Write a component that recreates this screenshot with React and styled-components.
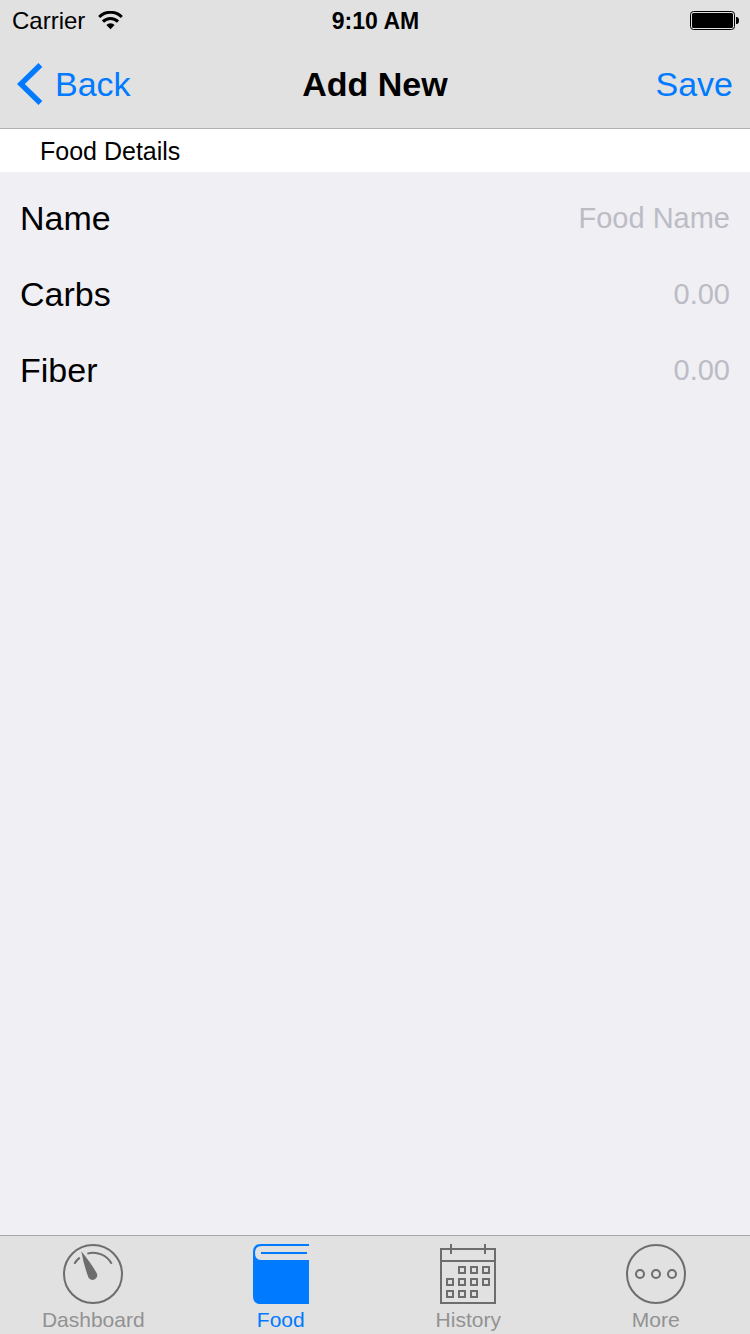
import React, { useState } from 'react';
import styled, { createGlobalStyle } from 'styled-components';

const GlobalStyle = createGlobalStyle`
  * {
    box-sizing: border-box;
  }
  body {
    margin: 0;
    background: #efeff4;
    color: #000;
    font-family: 'Liberation Sans', Arial, sans-serif;
  }
`;

const Screen = styled.div`
  display: flex;
  flex-direction: column;
  min-height: 100vh;
`;

const Header = styled.header`
  background: #e1e1e1;
  border-bottom: 1px solid #b2b2b2;
`;

const StatusBar = styled.div`
  display: grid;
  grid-template-columns: 1fr auto 1fr;
  align-items: center;
  height: 40px;
  padding: 1px 11px 0 12px;
  font-size: 24px;
  line-height: 38px;
`;

const Carrier = styled.div`
  display: flex;
  align-items: center;
  gap: 13px;
`;

const Clock = styled.time`
  font-size: 23px;
  font-weight: 700;
`;

const BatterySlot = styled.div`
  display: flex;
  justify-content: flex-end;
`;

const NavBar = styled.div`
  display: grid;
  grid-template-columns: 1fr auto 1fr;
  align-items: center;
  height: 88px;
  padding: 0 17px;
`;

const NavButton = styled.button`
  display: flex;
  align-items: center;
  gap: 12px;
  justify-self: ${props => (props.$end ? 'end' : 'start')};
  padding: 0;
  border: none;
  background: none;
  color: #007aff;
  font-family: inherit;
  font-size: 34px;
  line-height: 44px;
  cursor: pointer;
`;

const Title = styled.h1`
  margin: 0;
  font-size: 34px;
  line-height: 44px;
  font-weight: 700;
`;

const Form = styled.form`
  flex: 1;
`;

const SectionTitle = styled.h2`
  margin: 0 0 8px;
  padding: 2px 40px 1px;
  background: #fff;
  font-size: 25px;
  line-height: 40px;
  font-weight: 400;
`;

const Row = styled.div`
  display: flex;
  align-items: center;
  height: 76px;
  padding: 0 20px;
`;

const Label = styled.label`
  font-size: 34px;
  line-height: 44px;
`;

const Input = styled.input`
  flex: 1;
  min-width: 0;
  height: 44px;
  padding: 0;
  border: none;
  outline: none;
  background: none;
  color: #000;
  font-family: inherit;
  font-size: 29px;
  text-align: right;

  &::placeholder {
    color: #bcbcc4;
    opacity: 1;
  }
`;

const TabBar = styled.nav`
  display: flex;
  background: #e1e1e1;
  border-top: 1px solid #a7a7ac;
`;

const Tab = styled.a`
  flex: 1;
  display: flex;
  flex-direction: column;
  align-items: center;
  gap: 4px;
  padding: 8px 1px 2px 0;
  color: ${props => (props.$active ? '#007aff' : '#929292')};
  font-size: 21px;
  line-height: 24px;
  text-decoration: none;

  svg {
    color: ${props => (props.$active ? '#007aff' : '#6d6d6d')};
  }
`;

const WifiIcon = () => (
  <svg width="25" height="19" viewBox="0 0 25 19" fill="none" stroke="#000" strokeWidth="3" aria-hidden="true">
    <path d="M1.2 6a16 16 0 0 1 22.6 0" />
    <path d="M5 10.6a10.6 10.6 0 0 1 15 0" />
    <path d="M8.4 14a5.8 5.8 0 0 1 8.2 0L12.5 18.2z" fill="#000" stroke="none" />
  </svg>
);

const BatteryIcon = () => (
  <svg width="49" height="19" viewBox="0 0 49 19" role="img" aria-label="Battery full">
    <rect x="0.5" y="0.5" width="44" height="18" rx="3" fill="none" stroke="#000" />
    <rect x="2" y="2" width="41" height="15" rx="1.5" />
    <path d="M46 6h.5a2.5 3.5 0 0 1 0 7H46z" />
  </svg>
);

const BackIcon = () => (
  <svg width="26" height="42" viewBox="0 0 26 42" fill="currentColor" aria-hidden="true">
    <path d="M0 21 21.5 0 25.3 3.9 7.8 21 25.3 38.1 21.5 42z" />
  </svg>
);

const GaugeIcon = () => (
  <svg width="60" height="60" viewBox="0 0 60 60" fill="none" stroke="currentColor" strokeWidth="2" aria-hidden="true">
    <circle cx="30" cy="30" r="29" />
    <path d="M24.3 9.6A21.2 21.2 0 0 1 48.7 19.8M11.4 19.8A21.2 21.2 0 0 1 16.7 13.6" />
    <path
      d="M18.300 7.200Q28 19 33.300 28.400A4.700 4.700 0 1 1 24.900 32Q20.500 20 18.300 7.200z"
      fill="currentColor"
      stroke="none"
    />
  </svg>
);

const BookIcon = () => (
  <svg width="56" height="60" viewBox="0 0 56 60" fill="currentColor" aria-hidden="true">
    <path
      fillRule="evenodd"
      d="M8 0H56V2H8.500Q2 2 2 9Q2 16 8 16H56V60H8Q0 60 0 52V8Q0 0 8 0z"
    />
    <path d="M8 8H54V10H8z" />
  </svg>
);

const calendarDays = [
  [18, 22], [30, 22], [42, 22],
  [6, 34], [18, 34], [30, 34], [42, 34],
  [6, 46], [18, 46], [30, 46],
];

const CalendarIcon = () => (
  <svg width="56" height="60" viewBox="0 0 56 60" fill="none" stroke="currentColor" strokeWidth="2" aria-hidden="true">
    <path d="M1 5H55V59H1zM1 17H55M11 0V10M45 0V10" />
    {calendarDays.map(([x, y]) => (
      <rect key={`${x}-${y}`} x={x + 1} y={y + 1} width="6" height="6" />
    ))}
  </svg>
);

const MoreIcon = () => (
  <svg width="60" height="60" viewBox="0 0 60 60" fill="none" stroke="currentColor" strokeWidth="2" aria-hidden="true">
    <circle cx="30" cy="30" r="29" />
    <circle cx="14" cy="30" r="4" />
    <circle cx="30" cy="30" r="4" />
    <circle cx="46" cy="30" r="4" />
  </svg>
);

const fields = [
  { name: 'name', label: 'Name', placeholder: 'Food Name' },
  { name: 'carbs', label: 'Carbs', placeholder: '0.00', inputMode: 'decimal' },
  { name: 'fiber', label: 'Fiber', placeholder: '0.00', inputMode: 'decimal' },
];

const tabs = [
  { label: 'Dashboard', Icon: GaugeIcon },
  { label: 'Food', Icon: BookIcon },
  { label: 'History', Icon: CalendarIcon },
  { label: 'More', Icon: MoreIcon },
];

const App = () => {
  const [food, setFood] = useState({ name: '', carbs: '', fiber: '' });
  const [activeTab, setActiveTab] = useState('Food');

  const onChange = e => {
    const { name, value } = e.target;
    setFood(prev => ({ ...prev, [name]: value }));
  };

  return (
    <Screen>
      <GlobalStyle />
      <Header>
        <StatusBar>
          <Carrier>
            Carrier
            <WifiIcon />
          </Carrier>
          <Clock>9:10 AM</Clock>
          <BatterySlot>
            <BatteryIcon />
          </BatterySlot>
        </StatusBar>
        <NavBar>
          <NavButton type="button">
            <BackIcon />
            Back
          </NavButton>
          <Title>Add New</Title>
          <NavButton type="submit" form="food-form" $end>
            Save
          </NavButton>
        </NavBar>
      </Header>

      <Form id="food-form" onSubmit={e => e.preventDefault()}>
        <SectionTitle>Food Details</SectionTitle>
        {fields.map(({ name, label, ...rest }) => (
          <Row key={name}>
            <Label htmlFor={name}>{label}</Label>
            <Input id={name} name={name} type="text" value={food[name]} onChange={onChange} {...rest} />
          </Row>
        ))}
      </Form>

      <TabBar>
        {tabs.map(({ label, Icon }) => (
          <Tab
            key={label}
            href={`#${label.toLowerCase()}`}
            $active={label === activeTab}
            aria-current={label === activeTab ? 'page' : undefined}
            onClick={() => setActiveTab(label)}>
            <Icon />
            {label}
          </Tab>
        ))}
      </TabBar>
    </Screen>
  );
};

export default App;
